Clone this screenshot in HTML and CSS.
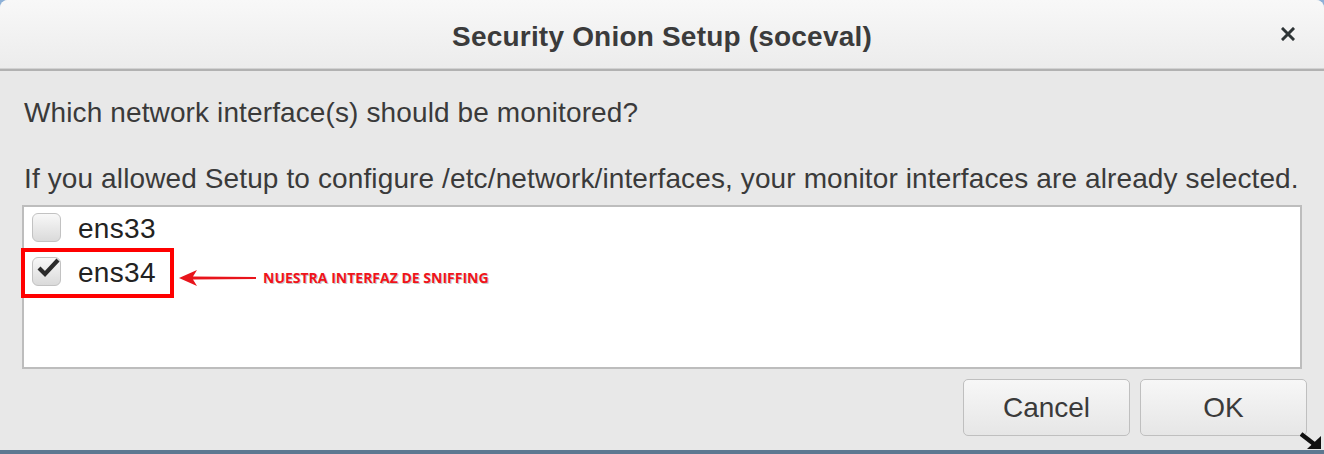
FILE: index.html
```html
<!DOCTYPE html>
<html>
<head>
<meta charset="utf-8">
<link rel="stylesheet" href="styles.css">
</head>
<body>
<div class="window">
  <div class="titlebar">
    <div class="title">Security Onion Setup (soceval)</div>
    <div class="close">
      <svg width="14" height="14" viewBox="0 0 14 14"><path d="M2 2 L12 12 M12 2 L2 12" stroke="#2e3436" stroke-width="3" stroke-linecap="square"/></svg>
    </div>
  </div>
  <div class="content">
    <p class="q">Which network interface(s) should be monitored?</p>
    <p class="hint">If you allowed Setup to configure /etc/network/interfaces, your monitor interfaces are already selected.</p>
    <div class="list">
      <div class="item">
        <span class="check"></span>
        <span class="label">ens33</span>
      </div>
      <div class="item">
        <span class="check">
          <svg class="tick" width="26" height="22" viewBox="0 0 26 22"><path d="M4 11 L10 17 L23 3" fill="none" stroke="#2b2b2b" stroke-width="4.2" stroke-linejoin="miter"/></svg>
        </span>
        <span class="label">ens34</span>
      </div>
      <div class="annot-box"></div>
      <div class="annot">
        <svg class="arrow" width="78" height="18" viewBox="0 0 78 18"><path d="M0 9 L18 1 L14 7.4 L77 8 L77 10 L14 10.6 L18 17 Z" fill="#e8141b"/></svg>
        <span class="annot-text">NUESTRA INTERFAZ DE SNIFFING</span>
      </div>
    </div>
    <div class="buttons">
      <button class="btn">Cancel</button>
      <button class="btn">OK</button>
    </div>
  </div>
  <svg class="grip" width="22" height="18" viewBox="0 0 22 18"><path d="M1 2 L14 12" stroke="#111" stroke-width="4.5" fill="none"/><path d="M21 17 L7 17 L21 4 Z" fill="#111"/></svg>
</div>
</body>
</html>
```

FILE: styles.css
```css
html, body {
  margin: 0;
  padding: 0;
}
body {
  width: 1324px;
  height: 454px;
  background: linear-gradient(#8db1d8, #5d7891 60%);
  overflow: hidden;
  font-family: "Liberation Sans", Arial, sans-serif;
}
.window {
  position: relative;
  width: 1324px;
  height: 450px;
  background: #e8e8e8;
  border-radius: 8px 8px 0 0;
  display: flex;
  flex-direction: column;
}
.titlebar {
  height: 68px;
  border-radius: 8px 8px 0 0;
  background: linear-gradient(#f8f8f8, #ececec);
  border-bottom: 1px solid #d2d2d2;
  box-shadow: 0 2px 0 #b1b1b1;
  margin-bottom: 2px;
  display: flex;
  align-items: center;
  justify-content: center;
  position: relative;
}
.title {
  font-weight: bold;
  font-size: 28px;
  letter-spacing: 0.2px;
  color: #3b3b3b;
  padding-top: 6px;
}
.close {
  position: absolute;
  right: 29px;
  top: 27px;
  width: 14px;
  height: 14px;
  display: flex;
}
.content {
  flex: 1;
  display: flex;
  flex-direction: column;
  padding: 0 22px;
}
.q, .hint {
  margin: 0;
  padding-left: 2px;
  font-size: 28px;
  line-height: 32px;
  letter-spacing: 0.12px;
  color: #3a3a3a;
  white-space: nowrap;
}
.q {
  margin-top: 26px;
}
.hint {
  margin-top: 34px;
}
.list {
  position: relative;
  margin-top: 10px;
  background: #fff;
  border: 2px solid #bdbdbd;
  box-sizing: border-box;
  height: 164px;
}
.item {
  display: flex;
  align-items: center;
  height: 44px;
  padding-left: 8px;
}
.check {
  position: relative;
  width: 27px;
  height: 27px;
  border: 1px solid #c2c2c2;
  border-radius: 6px;
  background: linear-gradient(#f8f8f8, #dadada);
  margin-top: -4px;
}
.tick {
  position: absolute;
  left: 2px;
  top: -1px;
}
.label {
  margin-left: 17px;
  font-size: 28px;
  line-height: 32px;
  letter-spacing: 0.3px;
  color: #222;
}
.annot-box {
  position: absolute;
  left: -3px;
  top: 41px;
  width: 145px;
  height: 42px;
  border: 4px solid #ff0000;
}
.annot {
  position: absolute;
  left: 155px;
  top: 61px;
  display: flex;
  align-items: center;
}
.arrow {
  display: block;
}
.annot-text {
  margin-left: 6px;
  font-family: "Open Sans", sans-serif;
  font-weight: bold;
  font-size: 14px;
  color: #f0141b;
  text-shadow: 1px 1px 0 #c8c8c8;
}
.buttons {
  display: flex;
  justify-content: flex-end;
  gap: 10px;
  margin-top: 10px;
  margin-right: -5px;
}
.btn {
  width: 167px;
  height: 57px;
  border: 1px solid #bfbfbf;
  border-radius: 5px;
  background: linear-gradient(#f7f7f7, #e6e6e6);
  font-family: "Liberation Sans", Arial, sans-serif;
  font-size: 28px;
  color: #3a3a3a;
  padding: 0;
}
.grip {
  position: absolute;
  right: 2px;
  bottom: 0;
}
```
